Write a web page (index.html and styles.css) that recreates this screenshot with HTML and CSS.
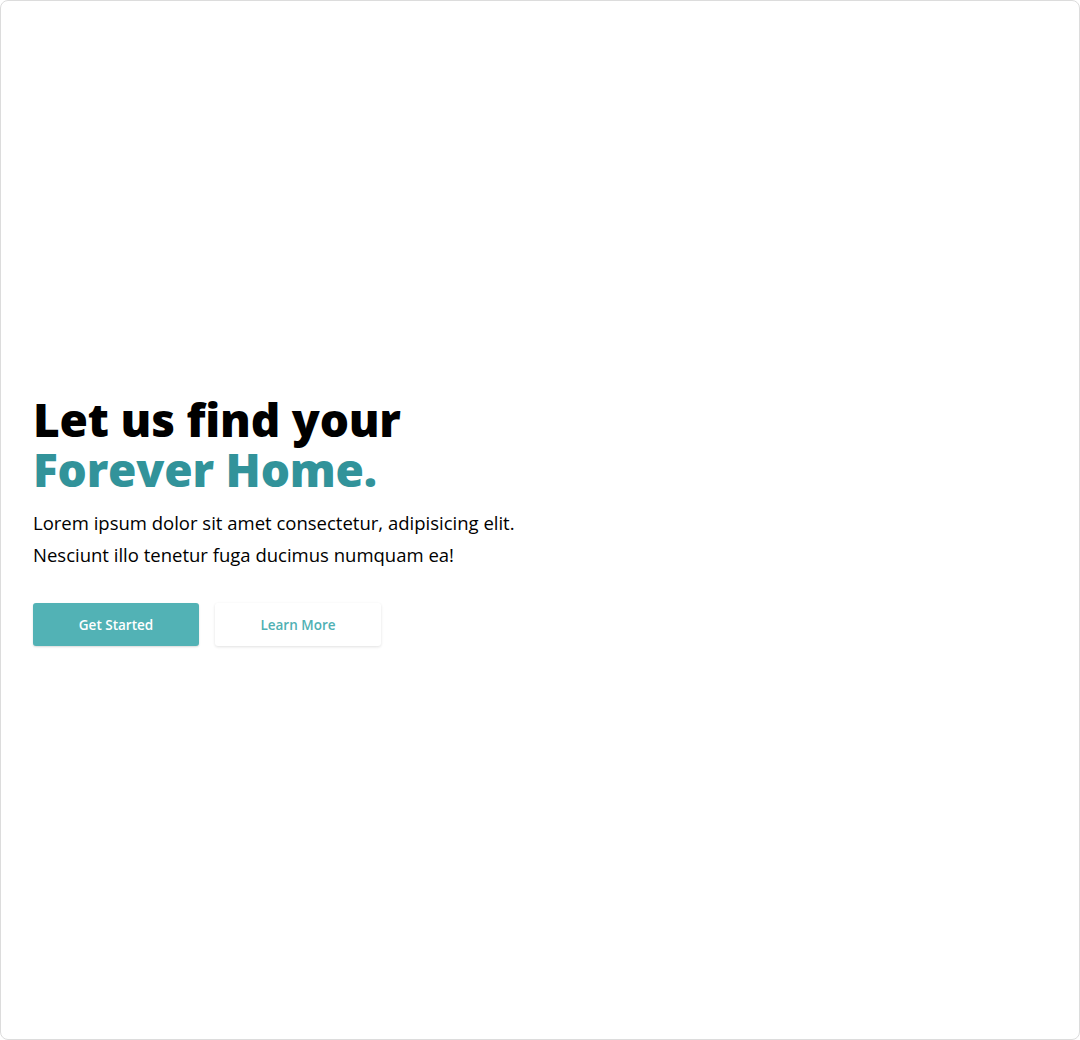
FILE: index.html
```html
<!DOCTYPE html>
<html lang="en">
<head>
<meta charset="utf-8">
<title>Forever Home</title>
<link rel="stylesheet" href="styles.css">
</head>
<body>
<div class="frame">
  <section class="hero">
    <h1 class="title">Let us find your<br><span class="accent">Forever Home.</span></h1>
    <p class="lead">Lorem ipsum dolor sit amet consectetur, adipisicing elit.<br>Nesciunt illo tenetur fuga ducimus numquam ea!</p>
    <div class="actions">
      <a class="btn btn-primary" href="#">Get Started</a>
      <a class="btn btn-secondary" href="#">Learn More</a>
    </div>
  </section>
</div>
</body>
</html>
```
FILE: styles.css
```css
* { box-sizing: border-box; }
html, body { margin: 0; padding: 0; }
body {
  font-family: "Open Sans", "Noto Sans", sans-serif;
  background: #fff;
  color: #000;
}
.frame {
  height: 1040px;
  border: 1px solid #dcdcdc;
  border-radius: 8px;
  display: flex;
  align-items: center;
  padding: 0 32px;
}
.title {
  margin: 0;
  font-size: 46px;
  font-weight: 800;
  line-height: 50px;
  letter-spacing: -0.2px;
}
.accent { color: #32939a; }
.lead {
  margin: 13px 0 0;
  font-size: 18.5px;
  line-height: 32px;
}
.actions {
  display: flex;
  gap: 16px;
  margin-top: 32px;
}
.btn {
  width: 166px;
  height: 43px;
  display: flex;
  align-items: center;
  justify-content: center;
  border-radius: 3px;
  font-size: 13.5px;
  font-weight: 600;
  text-decoration: none;
}
.btn-primary {
  background: #52b2b5;
  color: #fff;
  box-shadow: 0 1px 2px rgba(0,0,0,0.15);
}
.btn-secondary {
  background: #fff;
  color: #4fb0b3;
  box-shadow: 0 1px 3px rgba(0,0,0,0.12);
}
```
